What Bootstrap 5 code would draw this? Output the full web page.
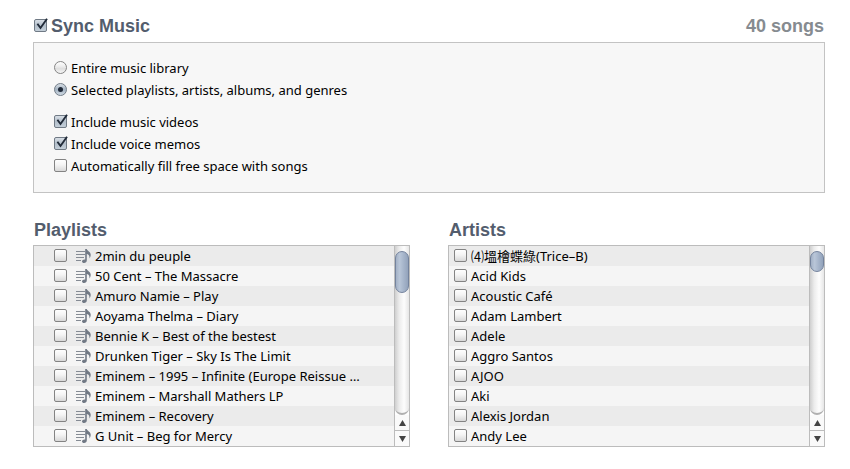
<!DOCTYPE html>
<html lang="en">
<head>
<meta charset="utf-8">
<meta name="viewport" content="width=device-width, initial-scale=1">
<title>Sync Music</title>
<link rel="stylesheet" href="https://cdn.jsdelivr.net/npm/bootstrap@5.3.0/dist/css/bootstrap.min.css">
<style>
  body { font: 13px/20px "Noto Sans", "Noto Sans CJK TC", sans-serif; color: #000; background: #fff; }
  main { padding: 14px 25px 22px 33px; }
  .title { font: bold 18px/24px "Liberation Sans", Arial, sans-serif; color: #535d6d; margin: 0; }
  .total { color: #868b90; }
  .title-row { margin-bottom: 4px; padding: 0 1px; }
  .options { background: #f7f7f7; border: 1px solid #c3c3c3; padding: 14px 20px 15px; margin-bottom: 25px; }
  .option { display: flex; align-items: center; gap: 2px; line-height: 22px; }
  .option-group + .option-group { margin-top: 10px; }
  .tick { appearance: none; flex: none; width: 15px; height: 15px; margin: 0; background: center / 15px 15px no-repeat; }
  .tick[type=checkbox] { margin-bottom: 2px; background-image: url("data:image/svg+xml,%3Csvg xmlns='http://www.w3.org/2000/svg' viewBox='0 0 15 15'%3E%3Cdefs%3E%3ClinearGradient id='g' x2='0' y2='1'%3E%3Cstop stop-color='%23fff'/%3E%3Cstop offset='.45' stop-color='%23f4f4f4'/%3E%3Cstop offset='1' stop-color='%23d6d6d6'/%3E%3C/linearGradient%3E%3C/defs%3E%3Crect x='.5' y='1.5' width='12' height='12' rx='1.5' fill='url(%23g)' stroke='%23838383'/%3E%3C/svg%3E"); }
  .tick[type=checkbox]:checked { background-image: url("data:image/svg+xml,%3Csvg xmlns='http://www.w3.org/2000/svg' viewBox='0 0 15 15'%3E%3Cdefs%3E%3ClinearGradient id='g' x2='0' y2='1'%3E%3Cstop stop-color='%23dbe1e8'/%3E%3Cstop offset='.5' stop-color='%23b3bfcb'/%3E%3Cstop offset='1' stop-color='%23c5d0da'/%3E%3C/linearGradient%3E%3C/defs%3E%3Crect x='.5' y='1.5' width='12' height='12' rx='1.5' fill='url(%23g)' stroke='%23707a85'/%3E%3Cpath d='M3.400 5.800l3.100 4.200L13 .8' fill='none' stroke='%23202a38' stroke-width='1.900'/%3E%3C/svg%3E"); }
  .tick[type=radio] { background-image: url("data:image/svg+xml,%3Csvg xmlns='http://www.w3.org/2000/svg' viewBox='0 0 15 15'%3E%3Cdefs%3E%3ClinearGradient id='g' x2='0' y2='1'%3E%3Cstop stop-color='%23fff'/%3E%3Cstop offset='.4' stop-color='%23eee'/%3E%3Cstop offset='.6' stop-color='%23dedede'/%3E%3Cstop offset='1' stop-color='%23fafafa'/%3E%3C/linearGradient%3E%3C/defs%3E%3Ccircle cx='6.5' cy='6.5' r='6' fill='url(%23g)' stroke='%23858585'/%3E%3C/svg%3E"); }
  .tick[type=radio]:checked { background-image: url("data:image/svg+xml,%3Csvg xmlns='http://www.w3.org/2000/svg' viewBox='0 0 15 15'%3E%3Cdefs%3E%3ClinearGradient id='g' x2='0' y2='1'%3E%3Cstop stop-color='%23dde3e9'/%3E%3Cstop offset='.5' stop-color='%23a4b3c2'/%3E%3Cstop offset='1' stop-color='%23d3dde6'/%3E%3C/linearGradient%3E%3C/defs%3E%3Ccircle cx='6.5' cy='6.5' r='6' fill='url(%23g)' stroke='%23747e89'/%3E%3Ccircle cx='6.5' cy='6.5' r='2.5' fill='%23202a38'/%3E%3C/svg%3E"); }
  .tick:focus-visible { outline: 2px solid #7da7d9; }
  .lists { --bs-gutter-x: 38px; }
  .title-list { margin-bottom: 3px; padding-left: 1px; }
  .list-box { border: 1px solid #bcbcbc; }
  .entries { min-width: 0; }
  .entry { display: flex; align-items: center; gap: 2px; height: 20px; padding-left: 5px; background: #f5f5f5; white-space: nowrap; }
  .entry:nth-child(odd) { background: #ebebeb; }
  .entries-playlist .entry { padding-left: 20px; }
  .note { flex: none; width: 18px; height: 16px; margin: 0 0 1px 4px; }
  .entry label { line-height: 20px; }
  .scroller { flex: none; width: 15px; border-left: 1px solid #bcbcbc; background: #fff; }
  .track { padding-top: 5px; border-bottom: 2px solid #b0b0b0; border-radius: 0 0 7px 7px; background: linear-gradient(90deg, #cfcfcf, #ececec 30%, #fdfdfd 65%, #e6e6e6); }
  .thumb { height: 21px; border: 1px solid #74839d; border-radius: 7px; background: linear-gradient(90deg, #a3b1c6, #b9c6d8 30%, #a5b4ca 65%, #93a3bb); }
  .thumb-long { height: 42px; }
  .arrow { display: flex; align-items: center; justify-content: center; height: 15px; padding: 0; border: 0; background: #fafafa; }
  .arrow + .arrow { border-top: 1px solid #bcbcbc; height: 16px; }
</style>
<script src="https://cdn.jsdelivr.net/npm/bootstrap@5.3.0/dist/js/bootstrap.bundle.min.js"></script>
</head>
<body>
<svg width="0" height="0" class="position-absolute" aria-hidden="true">
  <symbol id="note" viewBox="0 0 18 16">
    <path d="M1 3.500h9M1 6.500h9M1 9.500h8M1 12.500h5" stroke="#858b94" stroke-width="1.200" fill="none"/>
    <path d="M10.200 1h1.600c.2 2 3.900 2.600 3.900 5.800 0 1.500-.5 2.700-1.300 3.700.5-2.500-.5-4-2.600-4.600v6.600c0 1.500-1.200 2.400-2.700 2.400-1.300 0-2.100-.6-2.100-1.500 0-1.300 1.500-2.200 3.200-1.900z" fill="#717985"/>
  </symbol>
</svg>
<main>
  <div class="title-row d-flex justify-content-between">
    <div class="option">
      <input class="tick" type="checkbox" id="sync" checked>
      <h1 class="title"><label for="sync">Sync Music</label></h1>
    </div>
    <div class="title total">40 songs</div>
  </div>

  <section class="options">
    <div class="option-group">
      <div class="option"><input class="tick" type="radio" name="scope" id="all"><label for="all">Entire music library</label></div>
      <div class="option"><input class="tick" type="radio" name="scope" id="some" checked><label for="some">Selected playlists, artists, albums, and genres</label></div>
    </div>
    <div class="option-group">
      <div class="option"><input class="tick" type="checkbox" id="videos" checked><label for="videos">Include music videos</label></div>
      <div class="option"><input class="tick" type="checkbox" id="memos" checked><label for="memos">Include voice memos</label></div>
      <div class="option"><input class="tick" type="checkbox" id="fill"><label for="fill">Automatically fill free space with songs</label></div>
    </div>
  </section>

  <div class="row lists">
    <section class="col-6">
      <h2 class="title title-list">Playlists</h2>
      <div class="list-box d-flex">
        <ul class="entries entries-playlist list-unstyled flex-grow-1 mb-0">
          <li class="entry"><input class="tick" type="checkbox" id="p1"><svg class="note"><use href="#note"/></svg><label for="p1">2min du peuple</label></li>
          <li class="entry"><input class="tick" type="checkbox" id="p2"><svg class="note"><use href="#note"/></svg><label for="p2">50 Cent – The Massacre</label></li>
          <li class="entry"><input class="tick" type="checkbox" id="p3"><svg class="note"><use href="#note"/></svg><label for="p3">Amuro Namie – Play</label></li>
          <li class="entry"><input class="tick" type="checkbox" id="p4"><svg class="note"><use href="#note"/></svg><label for="p4">Aoyama Thelma – Diary</label></li>
          <li class="entry"><input class="tick" type="checkbox" id="p5"><svg class="note"><use href="#note"/></svg><label for="p5">Bennie K – Best of the bestest</label></li>
          <li class="entry"><input class="tick" type="checkbox" id="p6"><svg class="note"><use href="#note"/></svg><label for="p6">Drunken Tiger – Sky Is The Limit</label></li>
          <li class="entry"><input class="tick" type="checkbox" id="p7"><svg class="note"><use href="#note"/></svg><label for="p7">Eminem – 1995 – Infinite (Europe Reissue …</label></li>
          <li class="entry"><input class="tick" type="checkbox" id="p8"><svg class="note"><use href="#note"/></svg><label for="p8">Eminem – Marshall Mathers LP</label></li>
          <li class="entry"><input class="tick" type="checkbox" id="p9"><svg class="note"><use href="#note"/></svg><label for="p9">Eminem – Recovery</label></li>
          <li class="entry"><input class="tick" type="checkbox" id="p10"><svg class="note"><use href="#note"/></svg><label for="p10">G Unit – Beg for Mercy</label></li>
        </ul>
        <div class="scroller d-flex flex-column">
          <div class="track flex-grow-1"><div class="thumb thumb-long"></div></div>
          <button class="arrow" type="button" aria-label="Scroll up"><svg width="7" height="6"><path d="M3.500 0L7 6H0z" fill="#444"/></svg></button>
          <button class="arrow" type="button" aria-label="Scroll down"><svg width="7" height="6"><path d="M3.500 6L7 0H0z" fill="#444"/></svg></button>
        </div>
      </div>
    </section>
    <section class="col-6">
      <h2 class="title title-list">Artists</h2>
      <div class="list-box d-flex">
        <ul class="entries list-unstyled flex-grow-1 mb-0">
          <li class="entry"><input class="tick" type="checkbox" id="a1"><label for="a1">⑷塭檜蝶綠(Trice–B)</label></li>
          <li class="entry"><input class="tick" type="checkbox" id="a2"><label for="a2">Acid Kids</label></li>
          <li class="entry"><input class="tick" type="checkbox" id="a3"><label for="a3">Acoustic Café</label></li>
          <li class="entry"><input class="tick" type="checkbox" id="a4"><label for="a4">Adam Lambert</label></li>
          <li class="entry"><input class="tick" type="checkbox" id="a5"><label for="a5">Adele</label></li>
          <li class="entry"><input class="tick" type="checkbox" id="a6"><label for="a6">Aggro Santos</label></li>
          <li class="entry"><input class="tick" type="checkbox" id="a7"><label for="a7">AJOO</label></li>
          <li class="entry"><input class="tick" type="checkbox" id="a8"><label for="a8">Aki</label></li>
          <li class="entry"><input class="tick" type="checkbox" id="a9"><label for="a9">Alexis Jordan</label></li>
          <li class="entry"><input class="tick" type="checkbox" id="a10"><label for="a10">Andy Lee</label></li>
        </ul>
        <div class="scroller d-flex flex-column">
          <div class="track flex-grow-1"><div class="thumb"></div></div>
          <button class="arrow" type="button" aria-label="Scroll up"><svg width="7" height="6"><path d="M3.500 0L7 6H0z" fill="#444"/></svg></button>
          <button class="arrow" type="button" aria-label="Scroll down"><svg width="7" height="6"><path d="M3.500 6L7 0H0z" fill="#444"/></svg></button>
        </div>
      </div>
    </section>
  </div>
</main>
</body>
</html>
